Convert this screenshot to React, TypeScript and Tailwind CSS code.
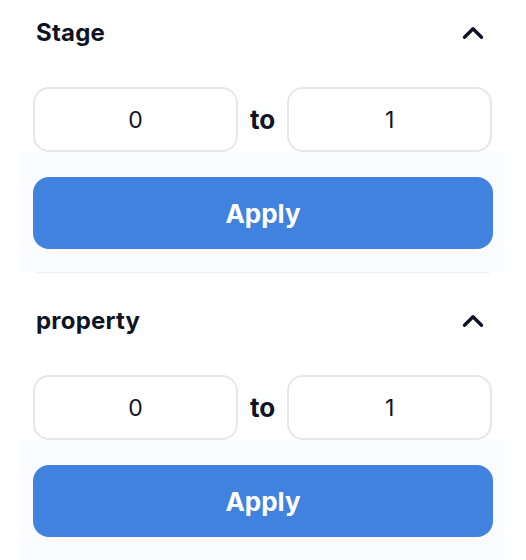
import { ChevronUp } from "lucide-react";
import clsx from "clsx";

function RangeFilter({ title, first }: { title: string; first?: boolean }) {
  return (
    <section>
      <div
        className={clsx(
          "flex items-center justify-between px-[36px]",
          first ? "pt-[16px]" : "pt-[31px]"
        )}
      >
        <h3 className="text-[24px] leading-[24px] font-bold tracking-[0.2px] text-[#0f1422]">{title}</h3>
        <ChevronUp size={34} strokeWidth={2.4} className="text-[#0f1422]" />
      </div>

      <div className="mt-[37px] flex items-center gap-3 pl-[33px] pr-[34px]">
        <input
          defaultValue="0"
          className="h-[65px] w-full min-w-0 flex-1 rounded-[16px] border-2 border-[#e5e7eb] bg-white text-center text-[23px] text-[#0f1422] outline-none"
        />
        <span className="text-[26px] leading-[26px] font-bold text-[#0f1422]">to</span>
        <input
          defaultValue="1"
          className="h-[65px] w-full min-w-0 flex-1 rounded-[16px] border-2 border-[#e5e7eb] bg-white text-center text-[23px] text-[#0f1422] outline-none"
        />
      </div>

      <div className="mx-[21px] bg-[#fafbfd] px-[12px] pt-[25px] pb-[23px]">
        <button
          type="button"
          className="h-[72px] w-full rounded-[16px] bg-[#4182df] text-[26px] font-bold text-white"
        >
          Apply
        </button>
      </div>
    </section>
  );
}

export default function App() {
  return (
    <main className="min-h-[560px] w-full bg-white font-['Inter',sans-serif]">
      <RangeFilter title="Stage" first />
      <div className="mx-[36px] h-px bg-[#eef0f3]" />
      <RangeFilter title="property" />
    </main>
  );
}
